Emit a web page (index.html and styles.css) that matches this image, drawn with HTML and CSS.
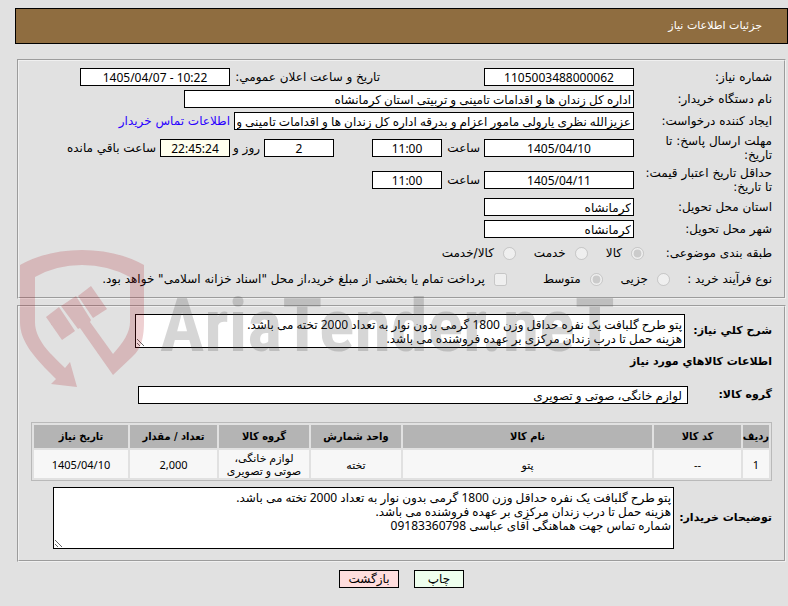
FILE: index.html
```
<!DOCTYPE html>
<html lang="fa" dir="rtl">
<head>
    <meta charset="UTF-8">
    <meta name="viewport" content="width=device-width, initial-scale=1.0">
    <title>جزئیات اطلاعات نیاز</title>
    <link rel="stylesheet" href="styles.css">
</head>
<body>
    <div class="header">
        <h1>جزئیات اطلاعات نیاز</h1>
    </div>

    <form class="page">
        <div class="panel info">
            <div class="row">
                <label class="label" for="needNo">شماره نیاز:</label>
                <input class="field medium center" id="needNo" type="text" value="1105003488000062" readonly>
                <label class="announce" for="announceDate">تاریخ و ساعت اعلان عمومي:</label>
                <input class="field medium center" id="announceDate" type="text" dir="ltr" value="1405/04/07 - 10:22" readonly>
            </div>
            <div class="row">
                <label class="label" for="buyerOrg">نام دستگاه خریدار:</label>
                <input class="field wide" id="buyerOrg" type="text" value="اداره کل زندان ها و اقدامات تامینی و تربیتی استان کرمانشاه" readonly>
            </div>
            <div class="row">
                <label class="label" for="creator">ایجاد کننده درخواست:</label>
                <input class="field long" id="creator" type="text" value="عزیزالله نظری یارولی مامور اعزام و بدرقه اداره کل زندان ها و اقدامات تامینی و تربیتی استان کرمانشاه" readonly>
                <a class="contact" href="#">اطلاعات تماس خریدار</a>
            </div>
            <div class="row tall">
                <label class="label" for="replyDate">مهلت ارسال پاسخ: تا تاریخ:</label>
                <input class="field medium center" id="replyDate" type="text" value="1405/04/10" readonly>
                <label class="unit" for="replyHour">ساعت</label>
                <input class="field short center" id="replyHour" type="text" value="11:00" readonly>
                <input class="field short center days" id="daysLeft" type="text" value="2" readonly>
                <label class="unit and" for="daysLeft">روز و</label>
                <input class="field short center timer" id="timeLeft" type="text" value="22:45:24" readonly>
                <label class="remain" for="timeLeft">ساعت باقي مانده</label>
            </div>
            <div class="row tall">
                <label class="label" for="priceDate">حداقل تاریخ اعتبار قیمت: تا تاریخ:</label>
                <input class="field medium center" id="priceDate" type="text" value="1405/04/11" readonly>
                <label class="unit" for="priceHour">ساعت</label>
                <input class="field short center" id="priceHour" type="text" value="11:00" readonly>
            </div>
            <div class="row">
                <label class="label" for="province">استان محل تحویل:</label>
                <input class="field medium" id="province" type="text" value="کرمانشاه" readonly>
            </div>
            <div class="row">
                <label class="label" for="city">شهر محل تحویل:</label>
                <input class="field medium" id="city" type="text" value="کرمانشاه" readonly>
            </div>
            <div class="row options">
                <span class="label subject">طبقه بندی موضوعی:</span>
                <label class="option"><input type="radio" name="subject" checked disabled>کالا</label>
                <label class="option"><input type="radio" name="subject" disabled>خدمت</label>
                <label class="option"><input type="radio" name="subject" disabled>کالا/خدمت</label>
            </div>
            <div class="row options">
                <span class="label process">نوع فرآیند خرید :</span>
                <label class="option"><input type="radio" name="process" disabled>جزیی</label>
                <label class="option"><input type="radio" name="process" checked disabled>متوسط</label>
                <label class="option treasury"><input type="checkbox" disabled>پرداخت تمام یا بخشی از مبلغ خرید،از محل "اسناد خزانه اسلامی" خواهد بود.</label>
            </div>
        </div>

        <div class="panel details">
            <div class="row">
                <label class="title for-summary" for="summary">شرح كلي نياز:</label>
                <textarea class="field area summary" id="summary" readonly>پتو طرح گلبافت یک نفره حداقل وزن 1800 گرمی بدون نوار به تعداد 2000 تخته می باشد.
هزینه حمل تا درب زندان مرکزی بر عهده فروشنده می باشد.</textarea>
            </div>
            <h2 class="title">اطلاعات كالاهاي مورد نياز</h2>
            <div class="row">
                <label class="title for-goods" for="goodsGroup">گروه کالا:</label>
                <input class="field goods" id="goodsGroup" type="text" value="لوازم خانگی، صوتی و تصویری" readonly>
            </div>
            <table class="items">
                <thead>
                    <tr>
                        <th class="col-row">ردیف</th>
                        <th class="col-code">کد کالا</th>
                        <th>نام کالا</th>
                        <th class="col-unit">واحد شمارش</th>
                        <th class="col-unit">گروه کالا</th>
                        <th class="col-code">تعداد / مقدار</th>
                        <th class="col-date">تاریخ نیاز</th>
                    </tr>
                </thead>
                <tbody>
                    <tr>
                        <td>1</td>
                        <td>--</td>
                        <td>پتو</td>
                        <td>تخته</td>
                        <td>لوازم خانگی، صوتی و تصویری</td>
                        <td>2,000</td>
                        <td>1405/04/10</td>
                    </tr>
                </tbody>
            </table>
            <div class="row">
                <label class="title for-notes" for="notes">توضیحات خریدار:</label>
                <textarea class="field area notes" id="notes" readonly>پتو طرح گلبافت یک نفره حداقل وزن 1800 گرمی بدون نوار به تعداد 2000 تخته می باشد.
هزینه حمل تا درب زندان مرکزی بر عهده فروشنده می باشد.
شماره تماس جهت هماهنگی آقای عباسی 09183360798</textarea>
            </div>
        </div>

        <div class="actions">
            <button class="btn print" type="button">چاپ</button>
            <button class="btn back" type="button">بازگشت</button>
        </div>
    </form>

    <div class="watermark" dir="ltr" aria-hidden="true">
        <svg width="126" height="140" viewBox="0 0 126 140">
            <path d="M0 15Q27 0 62 0T124 15V72C124 92 119 101 112 107L93 125L60 78L58 79L41 56L56 46L71 70L70 72L93 104C104 92 110 82 110 72V27Q88 15 62 15T15 27V72C15 88 27 101 45 118L50 112L57 137L31 134L36 129C15 108 0 92 0 72Z"/>
            <path d="M26 67L39 57L55 81L42 90Z"/>
            <path d="M58 46L71 36L87 59L73 68Z"/>
        </svg>
        <span class="brand">AriaTender.neT</span>
    </div>
</body>
</html>
```
FILE: styles.css
```
* {
    margin: 0;
    padding: 0;
    box-sizing: border-box;
}

body {
    position: relative;
    padding-top: 8px;
    font-family: 'DejaVu Sans', sans-serif;
    font-size: 12px;
    line-height: 14px;
    background: #e1e1e1;
    color: #000;
}

.header {
    display: flex;
    align-items: center;
    height: 36px;
    margin-left: 15px;
    padding: 0 25px;
    background: #8f6d40;
    border: 1px solid #000;
}

.header h1 {
    font-size: 11px;
    font-weight: normal;
    color: #fff;
}

.page {
    padding: 15px 2px 0 17px;
}

.panel {
    border: 2px groove #f0f0f0;
    padding: 7px 12px;
}

.info {
    display: flex;
    flex-direction: column;
    gap: 4px;
    margin-bottom: 6px;
}

.row {
    display: flex;
    align-items: center;
}

.tall {
    min-height: 28px;
}

.options {
    min-height: 22px;
}

.label {
    flex: none;
    width: 138px;
    padding-left: 10px;
}

.label.subject {
    width: 128px;
}

.label.process {
    width: 102px;
    padding-left: 0;
}

.field {
    flex: none;
    height: 18px;
    padding: 0 2px;
    font-family: 'Noto Sans', 'DejaVu Sans', sans-serif;
    font-size: 12px;
    background: #fff;
    border: 1px solid #000;
    border-radius: 0;
    color: #000;
}

.center {
    text-align: center;
}

.short {
    width: 70px;
}

.medium {
    width: 150px;
}

.long {
    width: 400px;
}

.wide {
    width: 450px;
}

.announce {
    width: 254px;
    padding-right: 104px;
    white-space: nowrap;
}

.contact {
    padding-right: 4px;
    color: #2a00ff;
    text-decoration: none;
    white-space: nowrap;
}

.unit {
    width: 42px;
    padding-right: 4px;
    white-space: nowrap;
}

.days {
    margin-right: 38px;
}

.unit.and {
    width: 34px;
}

.timer {
    background: #ffffee;
}

.remain {
    padding-right: 4px;
    white-space: nowrap;
}

.option {
    display: flex;
    align-items: center;
    gap: 9px;
    margin-left: 18px;
    white-space: nowrap;
}

.option input {
    width: 13px;
    height: 13px;
}

.treasury {
    margin-right: 18px;
}

.title {
    font-size: 11px;
    font-weight: bold;
    white-space: nowrap;
}

.details {
    padding-bottom: 11px;
}

.details h2 {
    margin: 7px 0 17px;
}

.for-summary {
    width: 87px;
}

.for-goods {
    width: 84px;
}

.for-notes {
    width: 98px;
}

.area {
    padding: 3px 2px;
    line-height: 14px;
    overflow: hidden;
}

.summary {
    width: 550px;
    height: 34px;
}

.goods {
    width: 550px;
    padding: 0 5px;
}

.notes {
    width: 621px;
    height: 62px;
}

.items {
    table-layout: fixed;
    width: 100%;
    margin: 18px 0 6px;
    border: 1px solid #b9b9b9;
    border-collapse: separate;
    border-spacing: 2px;
    font-size: 11px;
    text-align: center;
}

.items th {
    height: 23px;
    font-family: 'DejaVu Sans Condensed', 'DejaVu Sans', sans-serif;
    white-space: nowrap;
    background: #b4b4b4;
}

.items td {
    height: 28px;
    padding: 0 7px;
    font-family: 'Noto Sans', 'DejaVu Sans', sans-serif;
    line-height: 13px;
    background: #f7f7f7;
}

.col-row {
    width: 26px;
}

.col-code {
    width: 87px;
}

.col-unit {
    width: 90px;
}

.col-date {
    width: 94px;
}

.actions {
    display: flex;
    justify-content: center;
    gap: 15px;
    padding-top: 8px;
}

.btn {
    height: 18px;
    font-family: inherit;
    font-size: 12px;
    border: 1px solid #000;
    cursor: pointer;
}

.print {
    width: 50px;
    background: #eeffee;
}

.back {
    width: 60px;
    background: #ffdddd;
}

/* logo laid over the form */
.watermark {
    position: absolute;
    top: 250px;
    left: 20px;
    display: flex;
    align-items: center;
    gap: 14px;
    pointer-events: none;
}

.watermark svg {
    fill: rgba(170, 20, 30, 0.2);
}

.brand {
    padding-top: 12px;
    font-family: 'Roboto Condensed', 'Roboto', sans-serif;
    font-size: 74px;
    font-weight: bold;
    line-height: 80px;
    color: rgba(70, 70, 70, 0.22);
}
```
